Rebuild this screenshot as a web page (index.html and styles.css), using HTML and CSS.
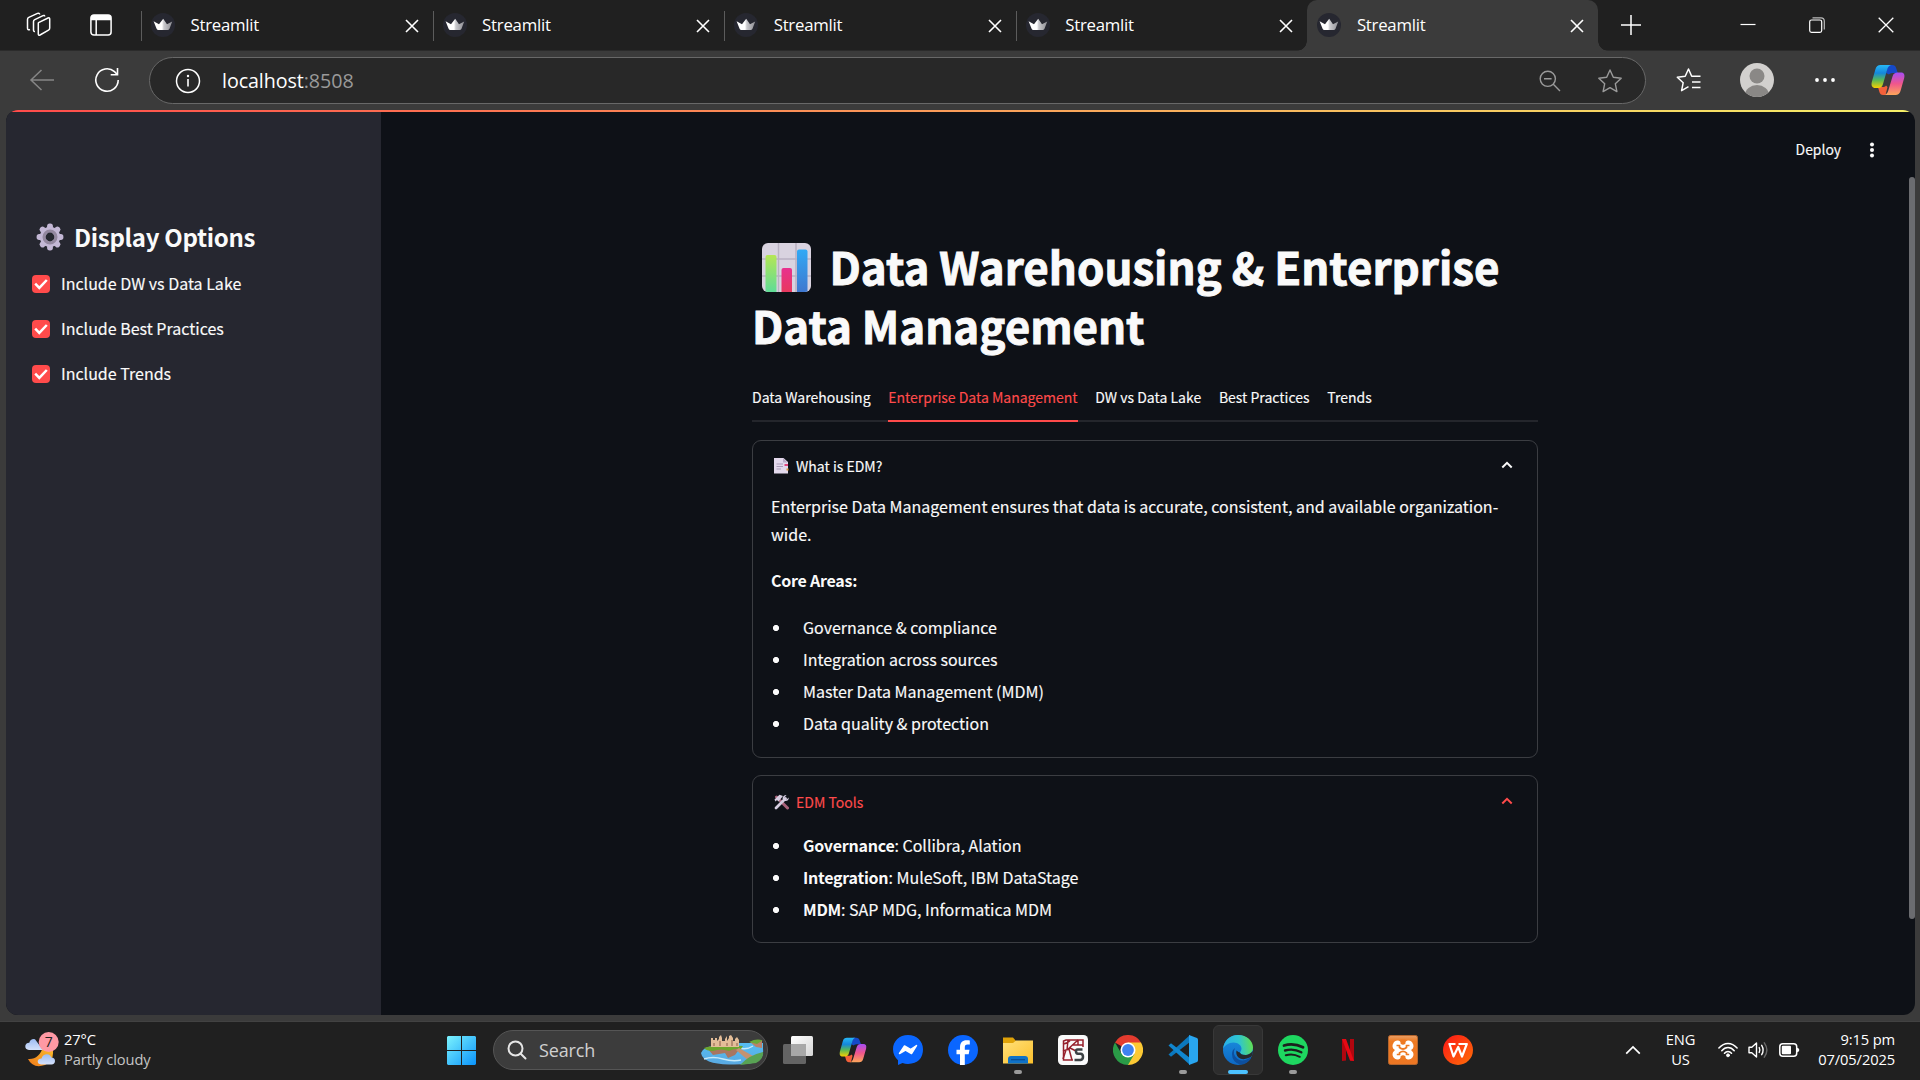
FILE: index.html
```html
<!DOCTYPE html>
<html lang="en">
<head>
<meta charset="utf-8">
<title>Streamlit</title>
<link rel="stylesheet" href="styles.css">
</head>
<body>
<svg class="defs" aria-hidden="true">
  <defs>
    <linearGradient id="cpA" x1="0" y1="0" x2="0" y2="1"><stop offset="0" stop-color="#27b8f7"/><stop offset=".35" stop-color="#1487dc"/><stop offset=".65" stop-color="#58b957"/><stop offset="1" stop-color="#f7d000"/></linearGradient>
    <linearGradient id="cpB" x1="0" y1="0" x2="0" y2="1"><stop offset="0" stop-color="#a64cf5"/><stop offset=".5" stop-color="#f0568c"/><stop offset="1" stop-color="#fda65a"/></linearGradient>
    <linearGradient id="crownG" x1="0" x2="1"><stop offset=".45" stop-color="#fff"/><stop offset=".55" stop-color="#c9c9cd"/><stop offset="1" stop-color="#8d8d93"/></linearGradient>
    <symbol id="crown" viewBox="0 0 24 24"><circle cx="12" cy="12" r="12" fill="#262730"/><path d="M2.6 8.2 8 11.2 12.2 5.7 16 11.2 21.2 8.4 18.6 15.6Q18.2 17 17 17H7Q5.900 17 5.500 15.600Z" fill="url(#crownG)"/></symbol>
    <symbol id="x" viewBox="0 0 14 14"><path d="M1 1 13 13M13 1 1 13" stroke="#fff" stroke-width="1.600" fill="none"/></symbol>
    <symbol id="copilot" viewBox="0 0 34 32">
      <path d="M17 1h4c2.500 0 3.500 1 4.200 3.200L26.800 9H23c-2 0-4 .3-5 1.500L15 9Z" fill="#1549c8"/>
      <path d="M16.500 23 14.500 31H12c-2 0-3-1-3.600-3L7 23h4c2 0 3.500-.5 4-1.500Z" fill="#f4603a"/>
      <path d="M9.500 1H20c-2.200.5-3.200 2.500-3.800 4.500L12 20c-.9 3-2.400 4-4.800 4H4.500C1 24 0 21.500.8 18L4.500 5C5.300 2.300 7 1 9.500 1Z" fill="url(#cpA)"/>
      <path d="M24.500 31H13.500c2.200-.5 3.200-2.500 3.800-4.500L21.500 12.500c.9-3 2.600-4 5-4h3c3.500 0 4.500 2 3.700 5.500L29.500 27c-.8 2.700-2.500 4-5 4Z" fill="url(#cpB)"/>
    </symbol>
  </defs>
</svg>

<div class="browser">
  <header class="tabstrip">
    <div class="strip-tools">
      <svg class="ic-work" width="26" height="26" viewBox="0 0 26 26" fill="none" stroke="#fff" stroke-width="1.500" stroke-linejoin="round"><path d="M12.500 10.600 22 6q1.700-.8 1.700 1V16q0 1.500-1.200 2.200L14 23q-1.700.8-1.700-1V11.500Q12.300 10.700 12.500 10.600Z"/><path d="M9 19.500q-1.500.3-1.500-1.500V9.500Q7.500 8.300 8.800 7.600L17 3.600Q18.500 3 18.700 4.500"/><path d="M4 17.500Q1.500 18.500 1.500 16V7.500Q1.500 6 2.800 5.400L11.500 1.400Q13.500.8 13.700 2.500"/></svg>
      <svg class="ic-pane" width="22" height="22" viewBox="0 0 22 22"><rect x=".9" y=".9" width="20.200" height="20.200" rx="3" fill="none" stroke="#fff" stroke-width="1.500"/><path d="M1 6.200V4Q1 1 4 1H18Q21 1 21 4V6.200Z" fill="#fff"/><path d="M6.200 6V21" stroke="#fff" stroke-width="1.500"/></svg>
    </div>
    <div class="tab"><svg class="fav"><use href="#crown"/></svg><span class="tab-title">Streamlit</span><svg class="tab-x"><use href="#x"/></svg></div>
    <div class="tab"><svg class="fav"><use href="#crown"/></svg><span class="tab-title">Streamlit</span><svg class="tab-x"><use href="#x"/></svg></div>
    <div class="tab"><svg class="fav"><use href="#crown"/></svg><span class="tab-title">Streamlit</span><svg class="tab-x"><use href="#x"/></svg></div>
    <div class="tab"><svg class="fav"><use href="#crown"/></svg><span class="tab-title">Streamlit</span><svg class="tab-x"><use href="#x"/></svg></div>
    <div class="tab active"><svg class="fav"><use href="#crown"/></svg><span class="tab-title">Streamlit</span><svg class="tab-x"><use href="#x"/></svg></div>
    <svg class="ic-plus" width="22" height="22" viewBox="0 0 22 22"><path d="M11 1V21M1 11H21" stroke="#fff" stroke-width="1.500"/></svg>
    <div class="win">
      <svg width="16" height="16" viewBox="0 0 16 16"><path d="M.5 7.500H15.500" stroke="#fff" stroke-width="1.200"/></svg>
      <svg width="16" height="16" viewBox="0 0 16 16" fill="none" stroke="#fff" stroke-width="1.200"><rect x=".7" y="3" width="12" height="12.300" rx="1.800"/><path d="M3.500 .8H12Q15.300.8 15.300 4V12.500" stroke="#bbb"/></svg>
      <svg width="16" height="16" viewBox="0 0 16 16"><path d="M.7.7 15.300 15.300M15.300.7.7 15.300" stroke="#fff" stroke-width="1.300"/></svg>
    </div>
  </header>

  <div class="toolbar">
    <svg class="ic-back" width="26" height="22" viewBox="0 0 26 22" fill="none" stroke="#868686" stroke-width="1.500"><path d="M12.500 1 2 11 12.500 21M2 11H25"/></svg>
    <svg class="ic-reload" width="26" height="26" viewBox="0 0 26 26" fill="none" stroke="#fff" stroke-width="1.600"><path d="M24.200 13A11.200 11.200 0 1 1 20.500 4.700L23.300 7.500"/><path d="M23.500 1V7.800H16.700"/></svg>
    <div class="omnibox">
      <svg width="26" height="26" viewBox="0 0 26 26"><circle cx="13" cy="13" r="11.500" fill="none" stroke="#fff" stroke-width="1.500"/><path d="M13 11V18.500" stroke="#fff" stroke-width="1.600"/><circle cx="13" cy="8" r="1.200" fill="#fff"/></svg>
      <span class="url">localhost<span class="port">:8508</span></span>
      <svg class="ic-zoom" width="22" height="22" viewBox="0 0 22 22" fill="none" stroke="#9a9a9a" stroke-width="1.400"><circle cx="8.800" cy="8.800" r="7.600"/><path d="M14.300 14.300 21 21M5 8.800H12.600"/></svg>
      <svg class="ic-star" width="26" height="26" viewBox="0 0 26 26" fill="none" stroke="#9a9a9a" stroke-width="1.400" stroke-linejoin="round"><path d="M13 2 16.300 9.300 24.200 10.200 18.300 15.700 19.900 23.600 13 19.700 6.100 23.600 7.700 15.700 1.800 10.200 9.700 9.300Z"/></svg>
    </div>
    <svg class="ic-favs" width="26" height="26" viewBox="0 0 26 26" fill="none" stroke="#fff" stroke-width="1.500" stroke-linejoin="round"><path d="M12.500 19.700 5.600 23.600 7.200 15.700 1.300 10.200 9.200 9.300 12.500 2 15.700 9.300H24.500M16 15H24.500M16 20.500H24.500"/></svg>
    <svg class="ic-user" width="34" height="34" viewBox="0 0 34 34"><clipPath id="uc"><circle cx="17" cy="17" r="17"/></clipPath><g clip-path="url(#uc)"><rect width="34" height="34" fill="#d2d0ce"/><circle cx="17" cy="13" r="7.500" fill="#8a8886"/><ellipse cx="17" cy="32" rx="12" ry="10" fill="#8a8886"/></g></svg>
    <svg class="ic-dots" width="22" height="6" viewBox="0 0 22 6" fill="#fff"><circle cx="3" cy="3" r="1.900"/><circle cx="11" cy="3" r="1.900"/><circle cx="19" cy="3" r="1.900"/></svg>
    <svg class="ic-cop" width="34" height="32"><use href="#copilot"/></svg>
  </div>

  <div class="page">
    <aside class="sidebar">
      <h2><svg class="gear" width="28" height="28" viewBox="-14 -14 28 28"><g fill="#c3b7d5"><circle r="10.200"/><g id="teeth"><rect x="-2.900" y="-13.400" width="5.800" height="26.800" rx="2.600"/><rect x="-13.400" y="-2.900" width="26.800" height="5.800" rx="2.600"/></g><use href="#teeth" transform="rotate(45)"/></g><circle r="6" fill="none" stroke="#93879f" stroke-width="3"/><circle r="4.400" fill="#262730"/></svg><span>Display Options</span></h2>
      <label class="check"><svg width="18" height="18" viewBox="0 0 18 18"><rect width="18" height="18" rx="4" fill="#ff4b4b"/><path d="M3.200 8.600 7.300 12.900 14.800 5" fill="none" stroke="#fff" stroke-width="2.500"/></svg><span>Include DW vs Data Lake</span></label>
      <label class="check"><svg width="18" height="18" viewBox="0 0 18 18"><rect width="18" height="18" rx="4" fill="#ff4b4b"/><path d="M3.200 8.600 7.300 12.900 14.800 5" fill="none" stroke="#fff" stroke-width="2.500"/></svg><span>Include Best Practices</span></label>
      <label class="check"><svg width="18" height="18" viewBox="0 0 18 18"><rect width="18" height="18" rx="4" fill="#ff4b4b"/><path d="M3.200 8.600 7.300 12.900 14.800 5" fill="none" stroke="#fff" stroke-width="2.500"/></svg><span>Include Trends</span></label>
    </aside>
    <main class="main">
      <div class="app-tools"><span>Deploy</span><svg width="6" height="16" viewBox="0 0 6 16" fill="#fafafa"><circle cx="3" cy="2.400" r="2"/><circle cx="3" cy="8" r="2"/><circle cx="3" cy="13.600" r="2"/></svg></div>
      <div class="content">
        <h1><svg class="chart" width="49" height="49" viewBox="0 0 49 49"><defs><linearGradient id="bg1" x1="0" y1="0" x2="0" y2="1"><stop offset="0" stop-color="#b5e655"/><stop offset="1" stop-color="#5fdc97"/></linearGradient><linearGradient id="bg2" x1="0" y1="0" x2="0" y2="1"><stop offset="0" stop-color="#e8308f"/><stop offset="1" stop-color="#e8395e"/></linearGradient><linearGradient id="bg3" x1="0" y1="0" x2="0" y2="1"><stop offset="0" stop-color="#31a9f5"/><stop offset="1" stop-color="#3f78cf"/></linearGradient><clipPath id="cc"><rect width="49" height="49" rx="6"/></clipPath></defs><g clip-path="url(#cc)"><rect width="49" height="49" fill="#d9d3e0"/><path d="M16.500 0V49M34 0V49M0 16H49M0 33H49" stroke="#b9b1c2" stroke-width="1.500"/><path d="M3.500 49V14Q3.500 12 5.500 12H12.500Q14.500 12 14.500 14V49Z" fill="url(#bg1)"/><path d="M19.500 49V27Q19.500 25 21.500 25H28Q30 25 30 27V49Z" fill="url(#bg2)"/><path d="M35 49V8.500Q35 6.500 37 6.500H43.500Q45.500 6.500 45.500 8.500V49Z" fill="url(#bg3)"/></g></svg><span>Data Warehousing &amp; Enterprise</span><br><span>Data Management</span></h1>
        <nav class="st-tabs"><span>Data Warehousing</span><span class="on">Enterprise Data Management</span><span>DW vs Data Lake</span><span>Best Practices</span><span>Trends</span></nav>
        <section class="expander one">
          <div class="ex-head">
            <svg width="15" height="16" viewBox="0 0 15 16"><path d="M0 0H9.500L14 4V15.500H0Z" fill="#e3d9ec"/><path d="M9 0 13.500 4.500H9Z" fill="#b9abc8"/><path d="M2.500 6H9M2.500 8.500H9M2.500 11H7" stroke="#a99bb8" stroke-width="1"/><path d="M10.500 7H14" stroke="#e0447c" stroke-width="2"/><path d="M12.500 11.500H14.500" stroke="#d9973a" stroke-width="2"/></svg>
            <span>What is EDM?</span>
            <svg class="chev" width="12" height="8" viewBox="0 0 12 8"><path d="M1.300 6.500 6 1.900 10.700 6.500" fill="none" stroke="#fafafa" stroke-width="2"/></svg>
          </div>
          <p>Enterprise Data Management ensures that data is accurate, consistent, and available organization-<br>wide.</p>
          <p class="lead"><b>Core Areas:</b></p>
          <ul><li>Governance &amp; compliance</li><li>Integration across sources</li><li>Master Data Management (MDM)</li><li>Data quality &amp; protection</li></ul>
        </section>
        <section class="expander two">
          <div class="ex-head red">
            <svg width="15" height="16" viewBox="0 0 15 16"><path d="M2.500 3 13.500 14" stroke="#a9627a" stroke-width="3" stroke-linecap="round"/><path d="M.5 5.500 5.500.8 9 2 4.500 7.500 3 6 1.500 7.500Z" fill="#d5cce0"/><path d="M2 14 11.500 4.500" stroke="#d5cce0" stroke-width="2.800" stroke-linecap="round"/><path d="M14.800 3.500 12.500 5.500 10.500 3.500 12.500 1A4 4 0 0 0 8.500 4.500L10.500 7Q14.800 7.500 14.800 3.500Z" fill="#d5cce0"/></svg>
            <span>EDM Tools</span>
            <svg class="chev" width="12" height="8" viewBox="0 0 12 8"><path d="M1.300 6.500 6 1.900 10.700 6.500" fill="none" stroke="#ff4b4b" stroke-width="2"/></svg>
          </div>
          <ul><li><b>Governance</b>: Collibra, Alation</li><li><b>Integration</b>: MuleSoft, IBM DataStage</li><li><b>MDM</b>: SAP MDG, Informatica MDM</li></ul>
        </section>
      </div>
    </main>
    <div class="scroll-thumb"></div>
  </div>
</div>

<footer class="taskbar">
  <div class="weather">
    <svg width="36" height="36" viewBox="0 0 36 36"><defs><linearGradient id="cl" x1="0" y1="0" x2="0" y2="1"><stop offset="0" stop-color="#9dbcf2"/><stop offset="1" stop-color="#d5e2fb"/></linearGradient><linearGradient id="mo" x1="1" y1="0" x2="0" y2="1"><stop offset="0" stop-color="#fbc02d"/><stop offset="1" stop-color="#ef7a1a"/></linearGradient></defs><path d="M3 27Q14 28 18.500 14H27Q31 28 20 33Q8 37 3 27Z" fill="url(#mo)"/><path d="M4 18Q0 17.500 .3 13.800 1 10.600 4.300 10.700 5.500 6.500 10 7.200L18 18Z" fill="url(#cl)"/><path d="M16 32.500Q12.500 32 12.700 29 13.200 26.400 16.500 26.500 18 22.200 22 22.300 25.500 22.500 26.200 25.500 30 25.500 30 29 29.800 32.200 26.500 32.500Z" fill="url(#cl)"/><circle cx="23.700" cy="10" r="10" fill="#ff99a4"/><text x="23.700" y="15" text-anchor="middle" class="badge">7</text></svg>
    <div class="two-line"><div class="temp">27°C</div><div class="cond">Partly cloudy</div></div>
  </div>
  <div class="apps">
    <svg class="start" width="29" height="29" viewBox="0 0 29 29"><defs><linearGradient id="wn" x1="0" y1="0" x2="1" y2="1"><stop offset="0" stop-color="#7cf3fd"/><stop offset="1" stop-color="#0a93fb"/></linearGradient></defs><path d="M1 0H14V14H0V1ZM15 0H28L29 1V14H15ZM0 15H14V29H1L0 28ZM15 15H29V28L28 29H15Z" fill="url(#wn)"/></svg>
    <div class="search">
      <svg width="20" height="20" viewBox="0 0 20 20" fill="none" stroke="#e6e6e6" stroke-width="2"><circle cx="8.500" cy="8.500" r="7"/><path d="M13.500 13.500 18.500 18.500" stroke-linecap="round"/></svg>
      <span>Search</span>
      <svg class="castle" width="63" height="30" viewBox="0 0 63 30"><defs><linearGradient id="sea" x1="0" y1="0" x2="0" y2="1"><stop offset="0" stop-color="#55bdf2"/><stop offset="1" stop-color="#5aa9e2"/></linearGradient></defs><path d="M0 18Q3 11 14 11L38 8H62V14Q63 22 57 26 50 30 28 29.500 2 29 0 18Z" fill="url(#sea)"/><path d="M3 24Q12 21 22 24T40 25M38 13Q46 15 52 11" stroke="#c5eafb" fill="none" stroke-width="1.500"/><path d="M49 7 61 5V13L55 12Z" fill="#b9826a"/><path d="M48 7Q56 3 61.500 5.500L56 9Z" fill="#69a93a"/><path d="M6 13 12 20 24 18 27 23 34 20 40 12Z" fill="#a97661"/><path d="M3 13Q15 9 42 11L40 14Q34 13 28 16 20 13 12 16 5 16 3 13Z" fill="#6ca62d"/><path d="M38 13 59 25 48 26 35 15Z" fill="#c49271"/><path d="M39 30Q48 20 62 17 63 24 55 28Z" fill="#58a253"/><path d="M10 12V3H12V5H14V3H16V6L18 4V2L20 0 21 3V6H24V4L26 1V6L28 3V1L30 0 32 3V6H34V4L36 2 38 5V12Z" fill="#e3bd98"/><path d="M13 8V11M19 6V11M26 8V11M31 5V11M36 8V11" stroke="#8a5d49" stroke-width="1"/></svg>
    </div>
    <div class="app"><svg width="30" height="30" viewBox="0 0 30 30"><defs><linearGradient id="tv" x1="0" y1="0" x2="1" y2="1"><stop offset="0" stop-color="#fff"/><stop offset="1" stop-color="#d5d5d5"/></linearGradient></defs><rect x="8" y="1" width="22" height="20" rx="1.500" fill="url(#tv)"/><rect x="0" y="9" width="23" height="20" rx="1.500" fill="#6b6b6b" fill-opacity=".9"/><path d="M8 9H23V21H8Z" fill="#a8a8a8"/></svg></div>
    <div class="app"><svg width="28" height="26" viewBox="0 0 34 32"><use href="#copilot"/></svg></div>
    <div class="app"><svg width="30" height="30" viewBox="0 0 30 30"><path d="M15 0C6.500 0 0 6 0 14.300 0 19 2 22.700 5 25.300V30L9.500 28Q12 29 15 29 30 28 30 14.300C30 6 23.500 0 15 0Z" fill="#0a66ff"/><path d="M6.500 18.500 11.500 11 17.500 14.500 23.500 10.500 18.500 18.500 12.500 15.200Z" fill="#fff" stroke="#fff" stroke-width="1.500" stroke-linejoin="round"/></svg></div>
    <div class="app"><svg width="30" height="30" viewBox="0 0 30 30"><circle cx="15" cy="15" r="15" fill="#0a66ff"/><path d="M12 30V19.300H8.500V14.800H12V12.500C12 7.500 14.500 5.200 18.500 5.200 20 5.200 21 5.300 21.800 5.500V9.600H19.500C17.300 9.600 16.800 10.600 16.800 12.500V14.800H21.500L20.700 19.300H16.800V30Z" fill="#fff"/></svg></div>
    <div class="app run"><svg width="30" height="30" viewBox="0 0 30 30"><defs><linearGradient id="fo" x1="0" y1="0" x2="1" y2="1"><stop offset="0" stop-color="#ffe07a"/><stop offset="1" stop-color="#fcc02c"/></linearGradient></defs><path d="M0 2.500H10L13 6V12H0Z" fill="#dfa208"/><path d="M0 8H10L13 5.500H30V28.500H0Z" fill="url(#fo)"/><path d="M5 28.500V24Q5 21 8 21H22Q25 21 25 24V28.500Z" fill="#0f72c8"/><path d="M8 24.700H22" stroke="#0a4b92" stroke-width="1.200"/></svg></div>
    <div class="app"><svg width="30" height="30" viewBox="0 0 30 30"><rect width="30" height="30" rx="4.500" fill="#fafafa"/><g fill="none" stroke="#96212c" stroke-width="1.500"><path d="M15 25H5.500V6L8 5H25V12"/><path d="M5 9Q10 8 12 5.500M10 5 9 15M5 16 11 14 14 25M9 15 20 5M14 10 25 10M12 13 18 16M8 15 5 24M20 5V10"/></g><path d="M24.500 14.500H19.500Q18 14.500 18 16.500T20 18.800H22.500Q25 19 25 21.700T22.500 25H16.500" fill="none" stroke="#3c4144" stroke-width="2.500"/></svg></div>
    <div class="app"><svg width="30" height="30" viewBox="0 0 30 30"><path d="M15 15 2 7.500A15 15 0 0 1 28 7.500Z" fill="#e33b2e"/><path d="M15 15V7.500H28A15 15 0 0 1 15 30Z" fill="#fcc934"/><path d="M15 15 21.500 18.800 15 30A15 15 0 0 1 2 7.500L8.500 18.800Z" fill="#2a9b47"/><circle cx="15" cy="15" r="7.500" fill="#fff"/><circle cx="15" cy="15" r="5.900" fill="#3f82f0"/></svg></div>
    <div class="app run"><svg width="30" height="30" viewBox="0 0 30 30"><path d="M22 7 3 21.800 .5 19.500 22 0Z" fill="#0b78be"/><path d="M22 23 3 8.200 .5 10.500 22 30Z" fill="#1086cf"/><path d="M21 0 29 3Q30 3.500 30 5V25Q30 26.500 29 27L21 30Z" fill="#29a6f0"/></svg></div>
    <div class="app run current"><svg width="30" height="30" viewBox="0 0 30 30"><defs><linearGradient id="e1" x1="0" y1=".5" x2="1" y2=".4"><stop offset="0" stop-color="#29aee8"/><stop offset=".55" stop-color="#2fc5cf"/><stop offset="1" stop-color="#62e04e"/></linearGradient><linearGradient id="e2" x1="0" y1="0" x2="0" y2="1"><stop offset="0" stop-color="#1b90e0"/><stop offset="1" stop-color="#0d68c4"/></linearGradient></defs><circle cx="15" cy="15" r="15" fill="url(#e2)"/><path d="M0 14C1 5.500 7 0 15 0 24 0 30 6 30 12.500 30 17.500 26 20 22.500 20 19 20 17 18.500 17 17.500 17 16.700 18.500 16 18.500 13.500 18.500 10.500 15 7.500 10.500 7.500 5.500 7.500 1.500 10.500 0 14Z" fill="url(#e1)"/><path d="M12 13Q9 19 14 23.500T27.500 22.500Q28.500 22.500 28 23.500 24 29.500 17.500 29.800 9 27 9 19 9 15 12 13Z" fill="#0d4f9e"/><path d="M17 17.500C17 18.500 19 20 22.500 20Q26 20 30 16 30 20 27.800 22 20 26 15.500 22.500 12.500 19.500 13.500 15.500 15.500 17.500 17 17.500Z" fill="#262a2e"/></svg></div>
    <div class="app run"><svg width="30" height="30" viewBox="0 0 30 30"><circle cx="15" cy="15" r="15" fill="#1ed760"/><g fill="none" stroke="#1b1f1d" stroke-linecap="round"><path d="M6 10.500Q15.500 7.500 25 12.300" stroke-width="2.800"/><path d="M7 15.500Q15.500 13 23.300 17.300" stroke-width="2.400"/><path d="M7.800 20.200Q15 18 21.800 21.800" stroke-width="2"/></g></svg></div>
    <div class="app"><svg width="30" height="30" viewBox="0 0 30 30"><path d="M9 4H13V25.500L9 26ZM17 4H21V26L17 25.500Z" fill="#b1060f"/><path d="M9 4H13L21 26 17 25.500Z" fill="#e50914"/></svg></div>
    <div class="app"><svg width="30" height="30" viewBox="0 0 30 30"><defs><linearGradient id="xa" x1="0" y1="0" x2="0" y2="1"><stop offset="0" stop-color="#e9a068"/><stop offset=".2" stop-color="#ee7a22"/><stop offset="1" stop-color="#ec7623"/></linearGradient></defs><rect x=".5" y=".5" width="29" height="29" rx="2" fill="url(#xa)" stroke="#b5652c"/><path d="M9 11Q15 15.500 21 11M9 19.500Q15 14.500 21 19.500M9.500 10Q13 15 9.500 20M20.500 10Q17 15 20.500 20" fill="none" stroke="#fff" stroke-width="9" stroke-linecap="round"/><path d="M8.500 10.500H11.500V12.500Q15 15.500 18.500 12.500V10.500H21.500M8.800 19.500H11.500V17.800Q15 15 18.500 17.800V19.500H21.200" fill="none" stroke="#ee7a22" stroke-width="1.700"/><path d="M12.500 4.500H17.500V8.500Q15 11 12.500 8.500ZM12.500 25.500H17.500V21.500Q15 19 12.500 21.500Z" fill="#ee7a22"/></svg></div>
    <div class="app"><svg width="30" height="30" viewBox="0 0 30 30"><defs><linearGradient id="wp" x1="0" y1="0" x2="1" y2="1"><stop offset="0" stop-color="#fb1616"/><stop offset="1" stop-color="#ff7008"/></linearGradient></defs><circle cx="15" cy="15" r="15" fill="url(#wp)"/><path d="M5.500 9H12.500M6.500 9 10.500 21.500 15.200 12 19 21.500 23.800 9H15.500" fill="none" stroke="#fff" stroke-width="2.200" stroke-linejoin="round"/></svg></div>
  </div>
  <div class="tray">
    <svg width="16" height="10" viewBox="0 0 16 10"><path d="M1.200 8.700 8 2 14.800 8.700" fill="none" stroke="#fff" stroke-width="1.700"/></svg>
    <div class="lang two-line"><div>ENG</div><div>US</div></div>
    <div class="status">
      <svg width="20" height="16" viewBox="0 0 20 16" fill="none" stroke="#fff" stroke-width="1.500" stroke-linecap="round"><path d="M.9 6Q5 1.500 10 1.500T19.100 6M3.800 8.800Q6.500 5.600 10 5.600T16.200 8.800M6.500 11.300Q8 9.500 10 9.500T13.500 11.300"/><circle cx="10" cy="13.300" r="1.500" fill="#fff" stroke-width=".8"/></svg>
      <svg width="21" height="18" viewBox="0 0 21 18" fill="none" stroke="#fff" stroke-width="1.400" stroke-linejoin="round" stroke-linecap="round"><path d="M1 6.300H3.800L8.500 2V16L3.800 11.700H1Z"/><path d="M11.200 6.500Q12.500 9 11.200 11.500M13.700 4.300Q16.500 9 13.700 13.700"/><path d="M16.300 1.800Q21.500 9 16.300 16.200" stroke="#6a6a6a"/></svg>
      <svg width="21" height="14" viewBox="0 0 21 14"><rect x=".8" y=".8" width="16.900" height="12.400" rx="3" fill="none" stroke="#fff" stroke-width="1.500"/><rect x="2.800" y="2.800" width="9.200" height="8.400" rx="1" fill="#fff"/><path d="M18 4.800Q20.300 5 20.300 7T18 9.200Z" fill="#fff"/></svg>
    </div>
    <div class="clock two-line"><div>9:15 pm</div><div>07/05/2025</div></div>
  </div>
</footer>
</body>
</html>
```
FILE: styles.css
```css
* { box-sizing: border-box; }
html, body { margin: 0; height: 100%; }
body {
  width: 1920px;
  height: 1080px;
  overflow: hidden;
  display: flex;
  flex-direction: column;
  background: #202020;
  color: #fff;
  font-family: "Open Sans", "Noto Sans", sans-serif;
}
svg { display: block; flex: none; }
.defs { position: absolute; width: 0; height: 0; }

/* Browser chrome */
.browser { height: 1021px; flex: none; background: #3b3b3b; display: flex; flex-direction: column; }
.tabstrip { height: 51px; flex: none; background: #202020; border-bottom: 1px solid #2b2b2b; display: flex; align-items: center; }
.strip-tools { width: 141px; flex: none; display: flex; align-items: center; padding-left: 26px; gap: 38px; }
.tab { width: 291.600px; height: 51px; flex: none; display: flex; align-items: center; padding: 0 14px 0 10px; background: linear-gradient(#5c5c5c, #5c5c5c) 0 11px / 1px 30px no-repeat; }
.fav { width: 24px; height: 24px; }
.tab-title { margin-left: 15.500px; font-size: 16.800px; letter-spacing: -0.250px; line-height: 24px; }
.tab-x { width: 14px; height: 14px; margin-left: auto; margin-top: 2px; }
.tab.active { position: relative; background: #3b3b3b; border-radius: 10px 10px 0 0; width: 291px; }
.tab.active::before, .tab.active::after { content: ""; position: absolute; bottom: 0; width: 10px; height: 10px; }
.tab.active::before { left: -10px; background: radial-gradient(circle at 0 0, transparent 9.500px, #3b3b3b 10px); }
.tab.active::after { right: -10px; background: radial-gradient(circle at 100% 0, transparent 9.500px, #3b3b3b 10px); }
.ic-plus { margin-left: 22px; }
.win { margin-left: auto; display: flex; gap: 53px; padding-right: 26px; }

.toolbar { height: 59px; flex: none; display: flex; align-items: center; padding-bottom: 2px; }
.ic-back { margin-left: 29px; }
.ic-reload { margin-left: 39px; }
.omnibox { width: 1497px; height: 47px; margin: 2px 0 0 29px; flex: none; border: 1px solid #686868; border-radius: 24px; background: #282828; display: flex; align-items: center; padding-left: 25px; }
.url { margin-left: 21px; font-size: 19.700px; letter-spacing: -0.080px; line-height: 28px; }
.port { color: #9a9a9a; }
.ic-zoom { margin-left: auto; margin-right: 36px; }
.ic-star { margin-right: 22px; }
.ic-favs { margin-left: 30px; }
.ic-user { margin-left: 38px; }
.ic-dots { margin-left: 40px; }
.ic-cop { margin-left: 35px; }

/* Web page */
.page {
  position: relative;
  width: 1909px;
  height: 905px;
  margin-left: 6px;
  border-radius: 12px;
  overflow: hidden;
  display: flex;
  background: #0e1117;
  color: #fafafa;
  font-family: "Noto Sans CJK SC", sans-serif;
  -webkit-text-stroke: 0.150px;
}
.page::before { content: ""; position: absolute; inset: 0 0 auto; height: 2px; background: linear-gradient(90deg, #ff4b4b, #f5f068); }
.sidebar { width: 375px; flex: none; background: #262730; padding: 109px 26px 0; }
h2 { margin: 0 0 15px; height: 36px; display: flex; align-items: center; font-size: 24px; line-height: 36px; font-weight: 600; letter-spacing: -0.300px; -webkit-text-stroke: 0; }
.gear { margin: 0 10px 0 4px; }
.check { height: 27px; margin-bottom: 18px; display: flex; align-items: center; gap: 11px; font-size: 16px; line-height: 27px; }

.main { flex: 1; }
.app-tools { height: 80px; display: flex; align-items: center; justify-content: flex-end; gap: 28px; padding-right: 40px; font-size: 13.900px; }
.app-tools span { margin-top: -2px; }
.content { width: 786px; margin: 47px 0 0 371px; }
h1 { margin: 0; font-size: 43.900px; line-height: 59px; font-weight: 700; white-space: nowrap; -webkit-text-stroke: 0.900px; }
.chart { display: inline-block; margin: 0 19px 0 9.500px; vertical-align: -7px; }
.st-tabs { height: 46px; margin-top: 21px; margin-bottom: 18px; display: flex; gap: 17.700px; font-size: 14px; line-height: 42px; border-bottom: 2px solid #24262c; }
.st-tabs .on { height: 46px; color: #ff4b4b; border-bottom: 2px solid #ff4b4b; }
.st-tabs span { white-space: nowrap; }
.expander { border: 1px solid #3b3d42; border-radius: 9px; padding: 0 18px; font-size: 16px; line-height: 28px; }
.expander b { letter-spacing: -0.250px; -webkit-text-stroke: 0; }
.one { height: 318px; margin-bottom: 17px; }
.two { height: 168px; }
.ex-head { height: 51px; display: flex; align-items: center; padding: 0 0 2px 3px; font-size: 14px; }
.two .ex-head { padding-bottom: 0; }
.ex-head span { margin-left: 7px; }
.chev { margin: 0 6px 2px auto; }
.red { color: #ff4b4b; }
.expander p { margin: 0 0 18px; white-space: nowrap; }
.expander .lead { margin-bottom: 17px; }
.expander ul { margin: 0; padding: 0; list-style: none; }
.expander li { height: 32px; line-height: 32px; padding-left: 32px; background: radial-gradient(circle at 5px 17px, #fafafa 2.700px, transparent 3.500px); }
.two ul { padding-top: 2px; }
.scroll-thumb { position: absolute; right: 0; top: 67px; width: 6px; height: 742px; border-radius: 3px; background: #6b6c70; }

/* Taskbar */
.taskbar { height: 59px; flex: none; border-top: 1px solid #424242; display: flex; align-items: center; padding-bottom: 2px; background: #202020; font-size: 14.700px; line-height: 20px; letter-spacing: -0.120px; }
.two-line { padding-bottom: 2px; }
.weather { width: 447px; flex: none; padding-left: 25px; display: flex; align-items: center; gap: 3px; }
.cond { color: #c4c4c4; }
.badge { font: 14px "Open Sans", sans-serif; fill: #222; }
.apps { display: flex; align-items: center; flex: none; }
.search { width: 275px; height: 40px; margin: 0 0 0 17px; border: 1px solid #555; border-radius: 20px; background: #3c3c3c; display: flex; align-items: center; padding: 0 3px 0 13px; font-size: 18px; color: #d0d0d0; }
.search span { margin-left: 12px; }
.castle { margin-left: auto; }
.app { position: relative; width: 50px; height: 50px; margin-left: 5px; border-radius: 6px; display: flex; align-items: center; justify-content: center; }
.run::after { content: ""; position: absolute; left: 21px; top: 45px; width: 8px; height: 4px; border-radius: 2px; background: #9a9a9a; }
.current { background: #2d2d2d; border: 1px solid #383838; }
.current::after { left: 14px; top: 44px; width: 20px; background: #4cc2ff; }
.tray { margin-left: auto; padding-right: 25px; display: flex; align-items: center; text-align: center; }
.lang { margin-left: 25px; }
.status { display: flex; align-items: center; gap: 10px; margin-left: 23px; }
.clock { margin-left: 18px; text-align: right; }
```
